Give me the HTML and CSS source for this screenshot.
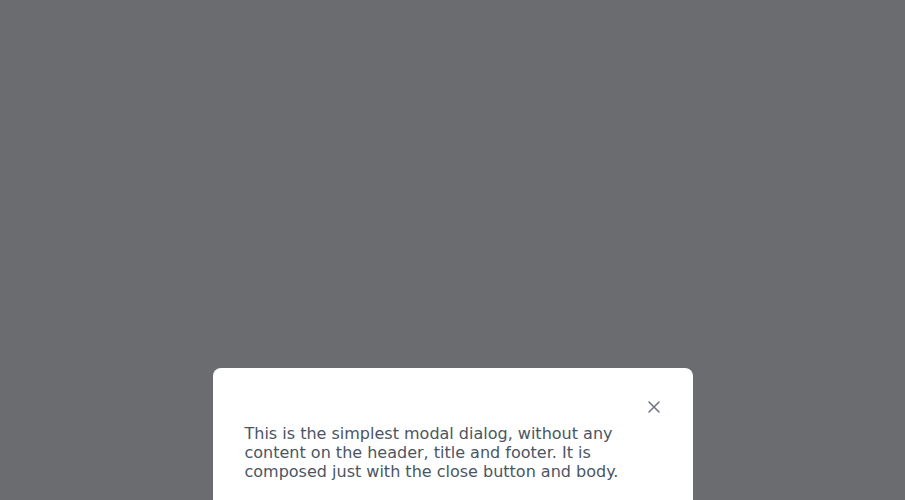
FILE: index.html
```html
<!DOCTYPE html>
<html lang="en">
<head>
<meta charset="utf-8">
<title>Modal</title>
<link rel="stylesheet" href="styles.css">
</head>
<body>
<div class="overlay">
  <div class="modal" role="dialog">
    <div class="modal-header">
      <button class="close" aria-label="Close">
        <svg width="12" height="12" viewBox="0 0 12 12"><path d="M1 1L11 11M11 1L1 11" stroke="currentColor" stroke-width="1.5" stroke-linecap="round"/></svg>
      </button>
    </div>
    <div class="modal-body">
      <p>This is the simplest modal dialog, without any content on the header, title and footer. It is composed just with the close button and body.</p>
    </div>
  </div>
</div>
</body>
</html>
```
FILE: styles.css
```css
html, body {
  margin: 0;
  height: 100%;
  overflow: hidden;
}
body {
  background: #6b6c6f;
  font-family: "DejaVu Sans", sans-serif;
}
.overlay {
  display: flex;
  justify-content: center;
  padding-top: 368px;
}
.modal {
  width: 480px;
  background: #fff;
  border-radius: 8px;
  padding: 32px;
  box-sizing: border-box;
}
.modal-header {
  display: flex;
  justify-content: flex-end;
  height: 14px;
}
.close {
  border: 0;
  background: none;
  padding: 0;
  margin-right: 0;
  margin-top: 0;
  width: 14px;
  height: 14px;
  display: flex;
  align-items: center;
  justify-content: center;
  color: #6b7280;
  cursor: pointer;
}
.modal-body p {
  margin: 10px 0 0 0;
  font-size: 16px;
  line-height: 19px;
  color: #4b5563;
}
```
